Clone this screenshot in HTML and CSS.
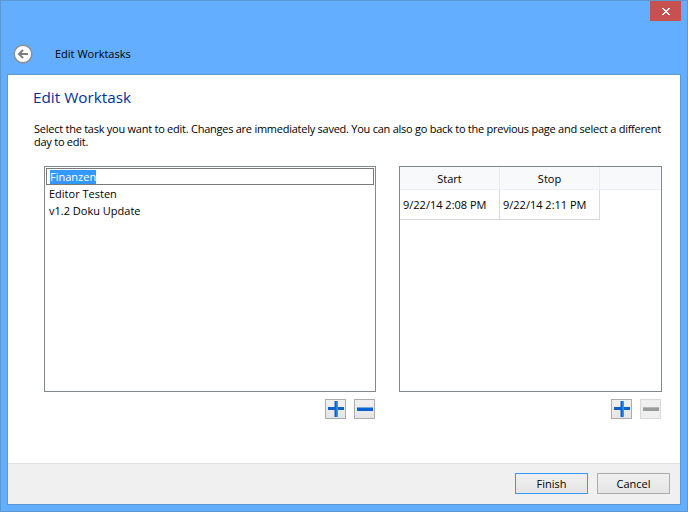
FILE: index.html
```html
<!DOCTYPE html>
<html lang="en">
<head>
<meta charset="utf-8">
<title>Edit Worktasks</title>
<link rel="stylesheet" href="styles.css">
</head>
<body>
<div class="window">
  <button class="close" aria-label="Close">
    <svg width="8" height="7" viewBox="0 0 8 7" shape-rendering="crispEdges"><path d="M0 0h2v1h1v1h2V1h1V0h2v1H7v1H6v1H5v1h1v1h1v1h1v1H6V6H5V5H3v1H2v1H0V6h1V5h1V4h1V3H2V2H1V1H0z" fill="#fff"/></svg>
  </button>
  <header class="caption">
    <span class="back">
      <svg width="20" height="20" viewBox="0 0 20 20">
        <circle cx="10" cy="10" r="8.8" fill="#fff" stroke="#8a8f96" stroke-width="1.5"/>
        <path d="M15 10H6.5M10 6l-4 4 4 4" fill="none" stroke="#7d7d7d" stroke-width="2"/>
      </svg>
    </span>
    <span class="caption-title">Edit Worktasks</span>
  </header>
  <div class="panel">
    <main class="content">
      <h1 class="heading">Edit Worktask</h1>
      <p class="intro">Select the task you want to edit. Changes are immediately saved. You can also go back to the previous page and select a different day to edit.</p>
      <div class="columns">
        <section class="col col-left">
          <div class="box list">
            <div class="item item-selected"><span class="sel">Finanzen</span></div>
            <div class="item">Editor Testen</div>
            <div class="item">v1.2 Doku Update</div>
          </div>
          <div class="tools">
            <button class="tool" aria-label="Add"><svg width="16" height="16" viewBox="0 0 16 16"><path d="M0 6h6.5V0H10v6h6v3h-6v7H6.500V9H0z" fill="#0a62cf"/><path d="M8.500 0H10v16H8.500z" fill="#3f92ea"/></svg></button>
            <button class="tool" aria-label="Remove"><svg width="16" height="4" viewBox="0 0 16 4"><path d="M0 0h16v1H0z" fill="#7aa6dc"/><path d="M0 1h16v3H0z" fill="#0a62cf"/></svg></button>
          </div>
        </section>
        <section class="col col-right">
          <div class="box table">
            <div class="thead">
              <div class="th">Start</div>
              <div class="th">Stop</div>
              <div class="th th-fill"></div>
            </div>
            <div class="tr">
              <div class="td">9/22/14 2:08 PM</div>
              <div class="td">9/22/14 2:11 PM</div>
            </div>
          </div>
          <div class="tools">
            <button class="tool" aria-label="Add"><svg width="16" height="16" viewBox="0 0 16 16"><path d="M0 6h6.5V0H10v6h6v3h-6v7H6.500V9H0z" fill="#0a62cf"/><path d="M8.500 0H10v16H8.500z" fill="#3f92ea"/></svg></button>
            <button class="tool tool-off" aria-label="Remove" disabled><svg width="16" height="4" viewBox="0 0 16 4"><path d="M0 0h16v1H0z" fill="#b5b8b6"/><path d="M0 1h16v3H0z" fill="#979b99"/></svg></button>
          </div>
        </section>
      </div>
    </main>
    <footer class="footer">
      <button class="btn btn-default">Finish</button>
      <button class="btn">Cancel</button>
    </footer>
  </div>
</div>
</body>
</html>
```
FILE: styles.css
```css
* { box-sizing: border-box; }
html, body { margin: 0; padding: 0; }
body {
  width: 688px;
  height: 512px;
  overflow: hidden;
  font-family: "Open Sans", "Noto Sans", sans-serif;
  font-size: 11px;
  color: #000;
}
button { font: inherit; padding: 0; margin: 0; }
.window {
  position: relative;
  width: 688px;
  height: 512px;
  display: flex;
  flex-direction: column;
  padding: 0 6px 6px;
  background: #63aefe;
  border: 1px solid #5b97d1;
}
.close {
  position: absolute;
  top: 0;
  right: 6px;
  width: 31px;
  height: 20px;
  border: 0;
  background: #c75050;
  display: flex;
  align-items: center;
  justify-content: center;
}
.caption {
  height: 73px;
  flex: none;
  display: flex;
  align-items: center;
  padding: 32px 0 0 6px;
}
.back { width: 20px; height: 20px; display: block; }
.back svg { display: block; }
.caption-title { margin-left: 22px; color: #000; }
.panel {
  flex: 1;
  min-height: 0;
  display: flex;
  flex-direction: column;
  background: #fff;
  border: 1px solid #5b97d1;
}
.content {
  flex: 1;
  min-height: 0;
  padding: 12px 0 0 25px;
  display: flex;
  flex-direction: column;
}
.heading {
  margin: 0;
  font-size: 15.3px;
  font-weight: 400;
  line-height: 20px;
  color: #003399;
}
.intro {
  margin: 15px 0 0 1px;
  line-height: 13px;
  width: 640px;
  letter-spacing: -0.25px;
}
.columns {
  display: flex;
  margin: 18px 0 0 11px;
}
.col { display: flex; flex-direction: column; }
.col-left { width: 332px; margin-right: 23px; }
.col-right { width: 263px; }
.box {
  height: 226px;
  border: 1px solid #828790;
  background: #fff;
}
.list { padding: 1px; }
.item {
  height: 17px;
  line-height: 17px;
  padding-left: 3px;
}
.item-selected {
  height: 17px;
  border: 1px solid #7a7a7a;
  padding-left: 3px;
  line-height: 15px;
}
.sel { background: #3399ff; color: #fff; display: inline-block; height: 14px; line-height: 14px; }
.thead { display: flex; height: 23px; border-bottom: 1px solid #e8f0f8; }
.th {
  width: 100px;
  flex: none;
  text-align: center;
  line-height: 23px;
  border-right: 1px solid #e6eef7;
  background: #f8f9fa;
}
.th-fill { flex: 1; border-right: 0; }
.tr { display: flex; height: 30px; }
.td {
  width: 100px;
  height: 30px;
  line-height: 29px;
  padding-left: 3px;
  border-right: 1px solid #d9d9d9;
  border-bottom: 1px solid #d9d9d9;
  white-space: nowrap;
}
.tools {
  display: flex;
  justify-content: flex-end;
  gap: 8px;
  margin-top: 7px;
  padding-right: 1px;
}
.tool {
  width: 21px;
  height: 20px;
  border: 1px solid #acacac;
  background: linear-gradient(#f0f0f0, #e5e5e5);
  display: flex;
  align-items: center;
  justify-content: center;
}
.tool-off { border-color: #d9d9d9; background: #efefef; }
.footer {
  flex: none;
  height: 41px;
  background: #f0f0f0;
  border-top: 1px solid #dfdfdf;
  display: flex;
  justify-content: flex-end;
  align-items: flex-start;
  gap: 9px;
  padding: 9px 10px 0 0;
}
.btn {
  width: 73px;
  height: 21px;
  border: 1px solid #acacac;
  background: linear-gradient(#f0f0f0, #e5e5e5);
  line-height: 19px;
  color: #000;
}
.btn.btn-default { border: 1px solid #3399ff; }
```
